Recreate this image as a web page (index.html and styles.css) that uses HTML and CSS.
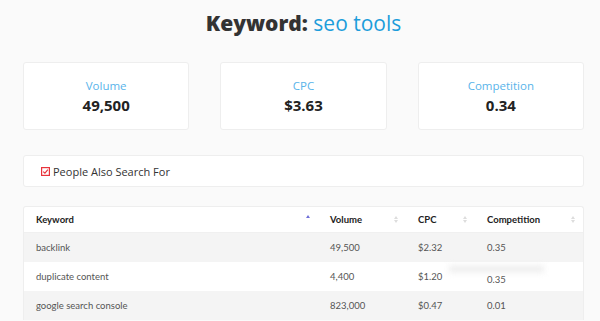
FILE: index.html
```html
<!DOCTYPE html>
<html lang="en">
<head>
    <meta charset="UTF-8">
    <meta name="viewport" content="width=device-width, initial-scale=1.0">
    <title>Keyword: seo tools</title>
    <link rel="stylesheet" href="styles.css">
</head>
<body>
    <div class="page">
        <h1 class="title"><strong>Keyword:</strong> <span>seo tools</span></h1>

        <div class="stats">
            <div class="stat-card">
                <div class="stat-label">Volume</div>
                <div class="stat-value">49,500</div>
            </div>
            <div class="stat-card">
                <div class="stat-label">CPC</div>
                <div class="stat-value">$3.63</div>
            </div>
            <div class="stat-card">
                <div class="stat-label">Competition</div>
                <div class="stat-value">0.34</div>
            </div>
        </div>

        <div class="panel">
            <svg class="check-icon" width="9" height="9" viewBox="0 0 9 9">
                <rect x="0.6" y="0.6" width="7.8" height="7.8" fill="none" stroke="#e8343c" stroke-width="1.2"/>
                <path d="M2.2 4.6 L3.9 6.1 L6.9 2.6" fill="none" stroke="#e8343c" stroke-width="1.2"/>
            </svg>
            <span>People Also Search For</span>
        </div>

        <div class="table-wrap">
            <table class="kw-table">
                <thead>
                    <tr>
                        <th class="col-kw">Keyword <span class="sort sort-active"></span></th>
                        <th class="col-vol">Volume <span class="sort"></span></th>
                        <th class="col-cpc">CPC <span class="sort"></span></th>
                        <th class="col-comp">Competition <span class="sort"></span></th>
                    </tr>
                </thead>
                <tbody>
                    <tr>
                        <td>backlink</td>
                        <td>49,500</td>
                        <td>$2.32</td>
                        <td>0.35</td>
                    </tr>
                    <tr>
                        <td>duplicate content</td>
                        <td>4,400</td>
                        <td>$1.20</td>
                        <td><span class="shifted">0.35</span></td>
                    </tr>
                    <tr>
                        <td>google search console</td>
                        <td>823,000</td>
                        <td>$0.47</td>
                        <td>0.01</td>
                    </tr>
                </tbody>
            </table>
            <div class="smudge"></div>
        </div>
    </div>
</body>
</html>
```

FILE: styles.css
```css
body {
    margin: 0;
    background-color: #fafafa;
    font-family: "Open Sans", Arial, sans-serif;
    color: #333;
}
.page {
    padding: 0 16px 0 23px;
}
.title {
    margin: 0;
    height: 62px;
    padding-top: 9px;
    box-sizing: border-box;
    text-align: center;
    font-size: 21px;
    font-weight: normal;
    font-family: "Open Sans", Arial, sans-serif;
}
.title strong {
    font-weight: 800;
    color: #333;
}
.title span {
    color: #1c9ddb;
}
.stats {
    display: flex;
    gap: 31px;
}
.stat-card {
    flex: 1;
    height: 68px;
    box-sizing: border-box;
    background: #fff;
    border: 1px solid #eeeeee;
    border-radius: 3px;
    text-align: center;
    padding-top: 15px;
}
.stat-label {
    font-size: 11.5px;
    color: #59b4ea;
    line-height: 16px;
}
.stat-value {
    font-size: 15px;
    font-weight: 700;
    color: #222;
    line-height: 22px;
}
.panel {
    margin-top: 25px;
    height: 32px;
    box-sizing: border-box;
    background: #fff;
    border: 1px solid #eeeeee;
    border-radius: 3px;
    display: flex;
    align-items: center;
    padding-left: 17px;
    font-size: 11px;
    color: #333;
}
.check-icon {
    margin-right: 3px;
}
.table-wrap {
    position: relative;
    margin-top: 19px;
    background: #fff;
    border: 1px solid #eeeeee;
    border-bottom: none;
    border-radius: 3px 3px 0 0;
}
.kw-table {
    width: 100%;
    border-collapse: collapse;
    font-family: Lato, "Open Sans", Arial, sans-serif;
    font-size: 9.5px;
}
.kw-table th {
    position: relative;
    height: 25px;
    text-align: left;
    font-weight: 700;
    color: #222;
    padding: 0 12px;
    border-bottom: 1px solid #f0f0f0;
}
.kw-table td {
    height: 29px;
    padding: 0 12px;
    color: #555;
}
.kw-table tbody tr:nth-child(odd) {
    background: #f4f4f4;
}
.col-kw { width: 270px; }
.col-vol { width: 64px; }
.col-cpc { width: 45px; }
.sort {
    position: absolute;
    right: 8px;
    top: 9px;
    width: 0;
    height: 0;
    border-left: 2px solid transparent;
    border-right: 2px solid transparent;
    border-bottom: 3px solid #ddd;
}
.sort::after {
    content: "";
    position: absolute;
    left: -2px;
    top: 4px;
    border-left: 2px solid transparent;
    border-right: 2px solid transparent;
    border-top: 3px solid #ddd;
}
.sort-active {
    border-bottom-color: #6f6fd8;
    top: 8px;
}
.sort-active::after {
    display: none;
}
.shifted {
    position: relative;
    top: 3px;
}
.smudge {
    position: absolute;
    left: 425px;
    top: 59px;
    width: 95px;
    height: 6px;
    background: #e6e6e6;
    filter: blur(3px);
    opacity: 0.8;
}
```
